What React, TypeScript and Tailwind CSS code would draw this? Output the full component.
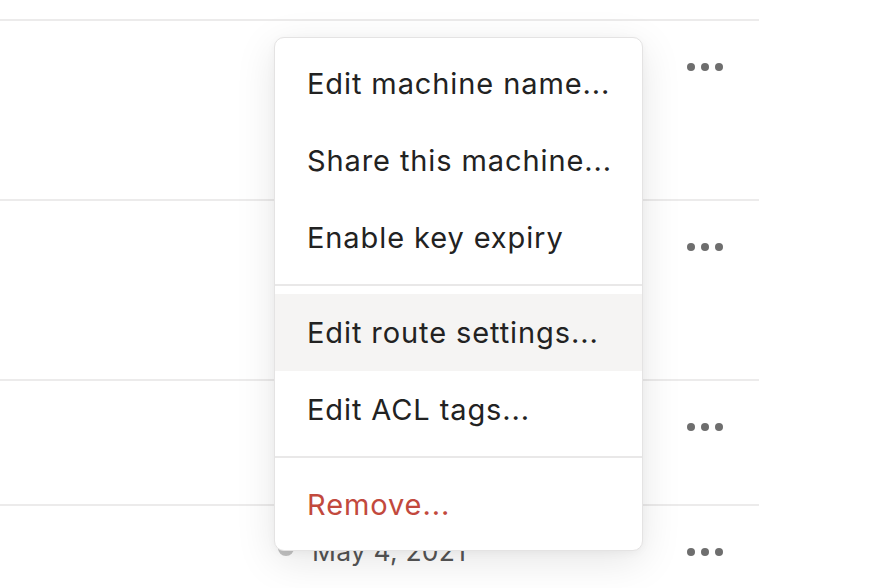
import React from 'react';

const font = { fontFamily: 'Inter, "Noto Sans", sans-serif' };

function MoreDots() {
  return (
    <div className="flex items-center gap-[6px]">
      <span className="w-[8px] h-[8px] rounded-full bg-[#6e6e6e]" />
      <span className="w-[8px] h-[8px] rounded-full bg-[#6e6e6e]" />
      <span className="w-[8px] h-[8px] rounded-full bg-[#6e6e6e]" />
    </div>
  );
}

function Row({ height, children }: { height: string; children?: React.ReactNode }) {
  return (
    <div className={`border-t-2 border-[#ecebeb] ${height}`}>
      <div className="h-[92px] flex items-center pr-[36px]">
        <div className="flex-1">{children}</div>
        <MoreDots />
      </div>
    </div>
  );
}

interface MenuItemProps {
  label: string;
  active?: boolean;
  danger?: boolean;
}

function MenuItem({ label, active, danger }: MenuItemProps) {
  return (
    <div
      className={`h-[77px] flex items-center px-[32px] text-[29px] tracking-[0.9px] whitespace-nowrap ${
        active ? 'bg-[#f5f4f3]' : ''
      } ${danger ? 'text-[#c2493d]' : 'text-[#222222]'}`}
    >
      {label}
    </div>
  );
}

function Separator() {
  return <div className="my-[8px] h-[2px] bg-[#e9e8e8]" />;
}

export default function App() {
  return (
    <div className="relative w-[888px] h-[588px] overflow-hidden bg-white" style={font}>
      <div className="w-[759px] pt-[19px]">
        <Row height="h-[180px]" />
        <Row height="h-[180px]" />
        <Row height="h-[125px]" />
        <Row height="h-[100px]">
          <div className="flex items-center pl-[278px] gap-[18px] text-[26.5px] tracking-[0.2px] text-[#555555] whitespace-nowrap">
            <span className="w-[16px] h-[16px] rounded-full bg-[#c4c4c4] -mt-[8px]" />
            <span>May 4, 2021</span>
          </div>
        </Row>
      </div>

      <div className="absolute left-[274px] top-[37px] w-[369px] rounded-[10px] border border-[#e4e3e3] bg-white pt-[7px] pb-[7px] shadow-[0_10px_40px_rgba(0,0,0,0.10),0_2px_8px_rgba(0,0,0,0.04)]">
        <MenuItem label="Edit machine name..." />
        <MenuItem label="Share this machine..." />
        <MenuItem label="Enable key expiry" />
        <Separator />
        <MenuItem label="Edit route settings..." active />
        <MenuItem label="Edit ACL tags..." />
        <Separator />
        <MenuItem label="Remove..." danger />
      </div>
    </div>
  );
}
